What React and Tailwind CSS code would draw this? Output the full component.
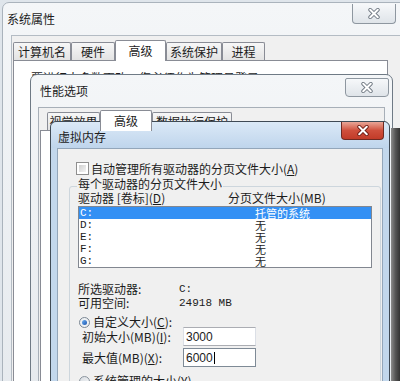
import React from "react";

const CloseX = ({ active }) => (
  <svg width="12" height="11" viewBox="0 0 12 11">
    <path
      d="M2.2 1.8 L9.8 9.2 M9.8 1.8 L2.2 9.2"
      stroke={active ? "#6b1a12" : "#6f7882"}
      strokeWidth="3.8"
      strokeLinecap="round"
    />
    <path
      d="M2.2 1.8 L9.8 9.2 M9.8 1.8 L2.2 9.2"
      stroke="#ffffff"
      strokeWidth="2"
      strokeLinecap="round"
    />
  </svg>
);

const Tab = ({ label, width, selected }) => (
  <div
    className={`flex items-center justify-center border border-b-0 border-[#898c95] rounded-t-[2px] text-[12px] leading-none ${
      selected ? "h-[21px] -mb-px relative z-10 bg-white" : "h-[18px] bg-linear-to-b from-[#f7f7f7] to-[#e3e3e3]"
    }`}
    style={{ width }}
  >
    {label}
  </div>
);

const drives = [
  { d: "C:", size: "托管的系统", selected: true },
  { d: "D:", size: "无" },
  { d: "E:", size: "无" },
  { d: "F:", size: "无" },
  { d: "G:", size: "无" },
];

export default function App() {
  return (
    <div className="relative w-[400px] h-[381px] overflow-hidden bg-[#dfe5eb] text-[#1c1c1c] font-['Noto_Sans_CJK_SC','Liberation_Sans',sans-serif]">
      {/* 系统属性 */}
      <div className="absolute left-[2px] top-[2px] w-[412px] h-[400px] flex flex-col rounded-t-[7px] border border-[#aab3bc] bg-linear-to-b from-[#f4f6f8] to-[#e6eaee]">
        <div className="h-[32px] pl-[4px] flex items-center text-[12px]">系统属性</div>
        <div className="absolute left-[349px] top-[1px] w-[44px] h-[20px] flex items-center justify-center rounded-b-[4px] border border-t-0 border-[#8e97a0] bg-linear-to-b from-[#f6f8fa] to-[#dfe4e9]">
          <CloseX />
        </div>
        <div className="ml-[8px] flex-1 flex flex-col bg-[#f0f0f0] border-l border-t border-[#b4bcc4] pl-[1px] pt-[4px]">
          <div className="flex items-end h-[20px]">
            <Tab label="计算机名" width={58} />
            <Tab label="硬件" width={44} />
            <Tab label="高级" width={51} selected />
            <Tab label="系统保护" width={56} />
            <Tab label="进程" width={43} />
          </div>
          <div className="w-[375px] flex-1 bg-white border border-[#898c95] pt-[11px] pl-[17px] text-[12px] leading-[12px]">
            要进行大多数更改，您必须作为管理员登录。
          </div>
        </div>
      </div>

      {/* 性能选项 */}
      <div className="absolute left-[30px] top-[74px] w-[363px] h-[330px] flex flex-col rounded-t-[7px] border border-[#6f7a85] bg-linear-to-b from-[#f4f6f8] to-[#e5e9ed]">
        <div className="h-[32px] pl-[9px] flex items-center text-[12px]">性能选项</div>
        <div className="absolute right-[3px] top-[3px] w-[44px] h-[19px] flex items-center justify-center rounded-b-[4px] rounded-t-[2px] border border-[#8e97a0] bg-linear-to-b from-[#f6f8fa] to-[#dfe4e9]">
          <CloseX />
        </div>
        <div className="mx-[7px] flex-1 flex flex-col bg-[#f0f0f0] border border-[#a7afb8] pl-[1px] pt-[2px]">
          <div className="flex items-end h-[20px] pl-[7px]">
            <Tab label="视觉效果" width={53} />
            <Tab label="高级" width={52} selected />
            <Tab label="数据执行保护" width={80} />
          </div>
          <div className="mr-[1px] flex-1 bg-white border border-[#898c95]" />
        </div>
      </div>

      {/* shadow strip on the right */}
      <div className="absolute left-[391px] top-[128px] w-[9px] h-[260px] bg-linear-to-r from-[#8c8c8c] via-[#555555] to-[#333333]" />

      {/* 虚拟内存 */}
      <div className="absolute left-[50px] top-[121px] w-[340px] h-[280px] flex flex-col rounded-t-[6px] border border-[#3f4a55] bg-[#c2d7ec]">
        <div className="h-[26px] pt-[3px] pl-[7px] flex items-center text-[12px] rounded-t-[6px] bg-linear-to-b from-[#dbe9f7] to-[#bfd5ec]">
          虚拟内存
        </div>
        <div className="absolute right-[5px] top-0 w-[43px] h-[18px] flex items-center justify-center rounded-b-[4px] border border-t-0 border-[#6e2a22] bg-linear-to-b from-[#e8a597] via-[#cf4f3c] to-[#c23b28]">
          <CloseX active />
        </div>

        <div className="mx-[6px] flex-1 flex flex-col bg-[#f0f0f0] border border-b-0 border-[#93a6ba] pt-[13px] text-[12px]">
          <div className="flex items-center h-[13px] pl-[18px] gap-[2px]">
            <div className="w-[13px] h-[13px] border border-[#8f8f8f] p-[2px] bg-white">
              <div className="w-full h-full bg-linear-to-br from-[#cfcfcf] to-[#f4f4f4]" />
            </div>
            <span className="leading-[13px]">
              自动管理所有驱动器的分页文件大小(<u>A</u>)
            </span>
          </div>

          <fieldset className="ml-[11px] mr-[1px] mt-[3px] border border-[#cdd6dd] rounded-[3px] px-[8px] pb-[10px]">
            <legend className="-ml-[1px] px-[1px] leading-[12px] pb-[4px]">每个驱动器的分页文件大小</legend>

            <div className="-mt-[2px] grid grid-cols-[150px_1fr] h-[12px] leading-[12px]">
              <span>驱动器 [卷标](<u>D</u>)</span>
              <span>分页文件大小(MB)</span>
            </div>

            <div className="mt-[2px] h-[62px] border border-[#828790] bg-white">
              {drives.map((r) => (
                <div
                  key={r.d}
                  className={`flex h-[12px] items-center ${r.selected ? "bg-[#3390f4] text-white" : ""}`}
                >
                  <span className="w-[176px] pl-[1px] font-['Liberation_Mono',monospace] text-[11px] leading-[12px]">
                    {r.d}
                  </span>
                  <span className="text-[11px] leading-[12px]">{r.size}</span>
                </div>
              ))}
            </div>

            <div className="mt-[14px] grid grid-cols-[101px_1fr] leading-[14px]">
              <span>所选驱动器:</span>
              <span className="font-['Liberation_Mono',monospace] text-[11px]">C:</span>
              <span>可用空间:</span>
              <span className="font-['Liberation_Mono',monospace] text-[11px]">24918 MB</span>
            </div>

            <div className="mt-[6px] flex items-center h-[12px] pl-[1px] gap-[3px]">
              <div className="w-[11px] h-[11px] rounded-full border border-[#7b8793] bg-[#eef1f4] flex items-center justify-center">
                <div className="w-[5px] h-[5px] rounded-full bg-linear-to-br from-[#6fb0f0] to-[#1a55b0]" />
              </div>
              <span className="leading-[12px]">
                自定义大小(<u>C</u>):
              </span>
            </div>

            <div className="-mt-[1px] flex items-center">
              <span className="w-[105px] pl-[4px] leading-[12px]">
                初始大小(MB)(<u>I</u>):
              </span>
              <div className="w-[73px] h-[19px] border border-[#abadb3] border-l-[#dbdfe6] border-r-[#dbdfe6] bg-white pl-[2px] flex items-center font-['Liberation_Sans',sans-serif] text-[12px]">
                3000
              </div>
            </div>

            <div className="mt-[2px] flex items-center">
              <span className="w-[105px] pl-[4px] leading-[12px]">
                最大值(MB)(<u>X</u>):
              </span>
              <div className="w-[73px] h-[19px] border border-[#7e8a96] bg-white pl-[2px] flex items-center font-['Liberation_Sans',sans-serif] text-[12px]">
                6000
                <span className="ml-px w-px h-[12px] bg-black" />
              </div>
            </div>

            <div className="mt-[8px] flex items-center h-[12px] pl-[1px] gap-[3px]">
              <div className="w-[11px] h-[11px] rounded-full border border-[#8a949e] bg-linear-to-br from-[#d8dde2] to-[#f6f7f8]" />
              <span className="leading-[12px]">
                系统管理的大小(<u>Y</u>)
              </span>
            </div>
          </fieldset>
        </div>
      </div>
    </div>
  );
}
